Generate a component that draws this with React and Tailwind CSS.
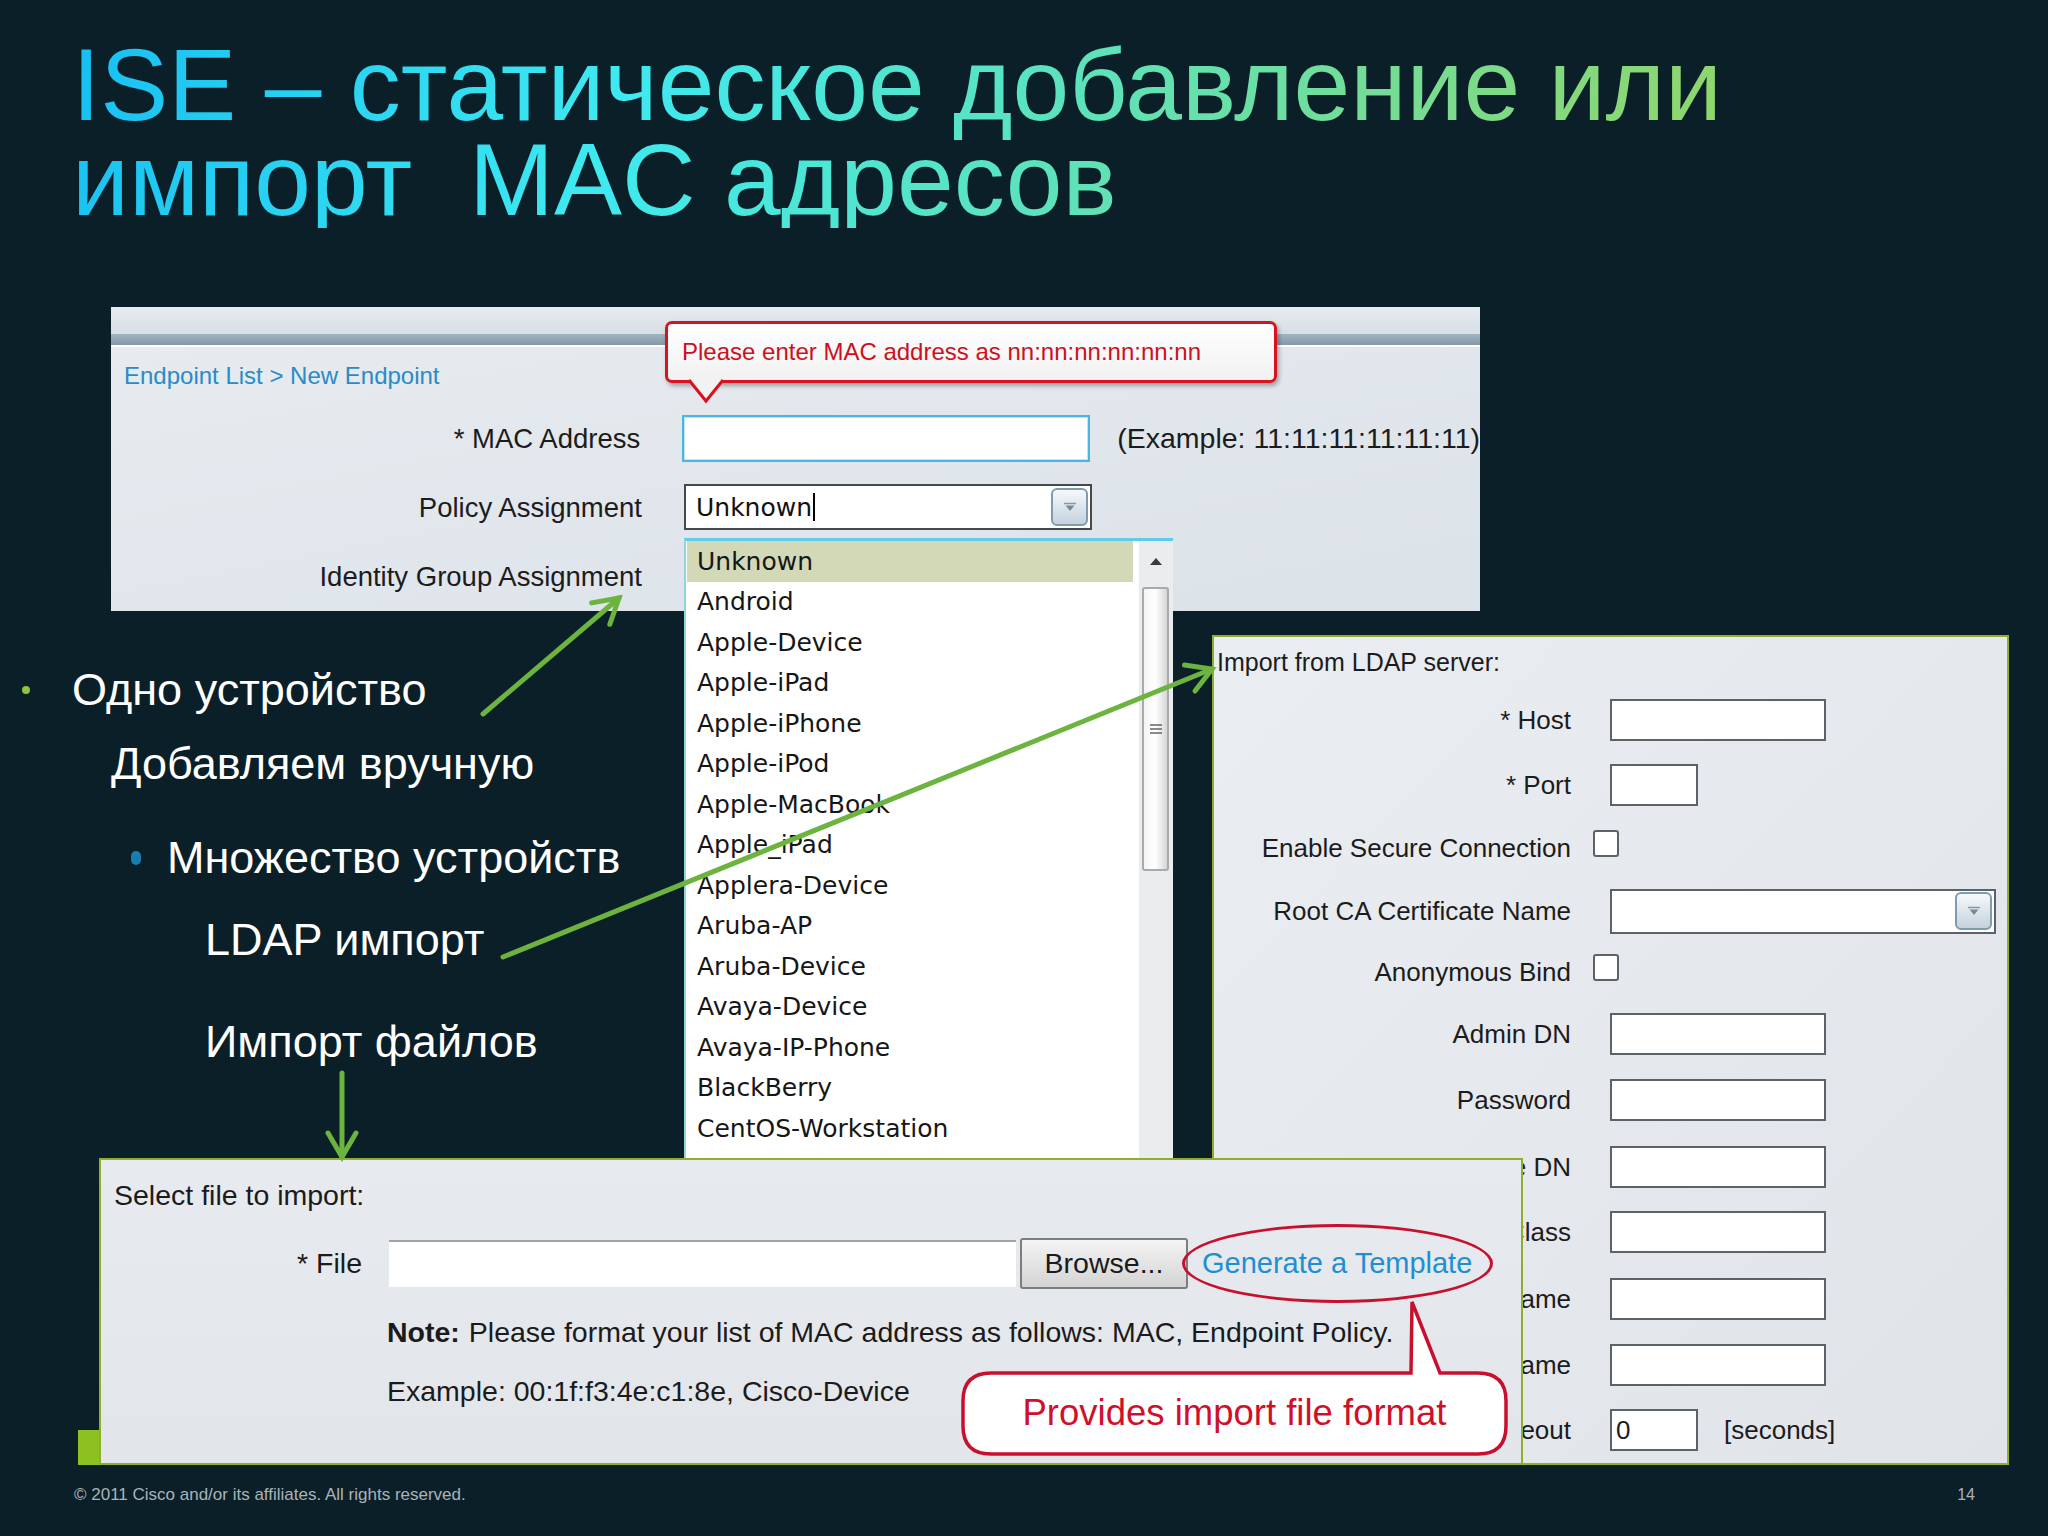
import React from 'react';

const deviceTypes = [
  'Unknown',
  'Android',
  'Apple-Device',
  'Apple-iPad',
  'Apple-iPhone',
  'Apple-iPod',
  'Apple-MacBook',
  'Apple_iPad',
  'Applera-Device',
  'Aruba-AP',
  'Aruba-Device',
  'Avaya-Device',
  'Avaya-IP-Phone',
  'BlackBerry',
  'CentOS-Workstation',
  'Cisco-Access-Point',
];

// row spacing in the LDAP form is uneven in the original screenshot
const ldapRows = [
  { label: '* Host', kind: 'input', width: 'w-[216px]', gap: 'mt-[10px]' },
  { label: '* Port', kind: 'input', width: 'w-[88px]', gap: 'mt-[21px]' },
  { label: 'Enable Secure Connection', kind: 'check', gap: 'mt-[19px]' },
  { label: 'Root CA Certificate Name', kind: 'select', gap: 'mt-[19px]' },
  { label: 'Anonymous Bind', kind: 'check', gap: 'mt-[17px]' },
  { label: 'Admin DN', kind: 'input', width: 'w-[216px]', gap: 'mt-[18px]' },
  { label: 'Password', kind: 'input', width: 'w-[216px]', gap: 'mt-[22px]' },
  { label: '* Base DN', kind: 'input', width: 'w-[216px]', gap: 'mt-[23px]' },
  { label: '* Object Class', kind: 'input', width: 'w-[216px]', gap: 'mt-[21px]' },
  { label: '* MAC Attribute Name', kind: 'input', width: 'w-[216px]', gap: 'mt-[23px]' },
  { label: 'Policy Name', kind: 'input', width: 'w-[216px]', gap: 'mt-[22px]' },
  { label: 'Timeout', kind: 'timeout', gap: 'mt-[21px]' },
];

const DropButton = () => (
  <span className="flex h-[38px] w-[37px] items-center justify-center rounded-[6px] border-2 border-[#7f9bb0] bg-linear-to-b from-[#f6f9fb] to-[#c4d2dd]">
    <svg width="14" height="10" viewBox="0 0 14 10">
      <path d="M1 1.5h12" stroke="#8a96a0" strokeWidth="1.5" />
      <path d="M2.5 3.5h9L7 9z" fill="#7b8894" />
    </svg>
  </span>
);

const TextBox = ({ className, children }) => (
  <div className={`flex h-[42px] items-center border-2 border-[#5b6268] bg-white pl-[4px] ${className}`}>{children}</div>
);

const CheckBox = () => <div className="h-[27px] w-[26px] rounded-[3px] border-2 border-[#5b6268] bg-white" />;

const App = () => {
  return (
    <div className="relative flex h-[1536px] w-[2048px] flex-col overflow-hidden bg-[#0b1f29] font-['Liberation_Sans',Arial,sans-serif]">
      {/* Slide title */}
      <div className="pl-[72px] pt-[38px]">
        <h1 className="w-fit bg-linear-[108deg,#17bff2_0%,#3ee9f0_33%,#5fe2b6_62%,#93d566_100%] bg-clip-text text-[102px] leading-[95px] text-transparent">
          ISE – статическое добавление или
          <br />
          импорт&nbsp; MAC адресов
        </h1>
      </div>

      {/* Bullets */}
      <div className="mt-[432px] flex flex-col text-[45px] leading-[60px] text-white">
        <div className="flex h-[60px] items-center pl-[22px]">
          <span className="h-[8px] w-[8px] rounded-full bg-[#8cc63f]" />
          <span className="ml-[42px]">Одно устройство</span>
        </div>
        <div className="mt-[14px] flex h-[60px] items-center pl-[111px]">Добавляем вручную</div>
        <div className="mt-[34px] flex h-[60px] items-center pl-[131px]">
          <span className="h-[14px] w-[10px] rounded-full bg-[#1a7db0]" />
          <span className="ml-[26px]">Множество устройств</span>
        </div>
        <div className="mt-[22px] flex h-[60px] items-center pl-[205px]">LDAP импорт</div>
        <div className="mt-[42px] flex h-[60px] items-center pl-[205px]">Импорт файлов</div>
      </div>

      {/* Footer */}
      <div className="mb-[31px] mt-auto flex h-[20px] items-center justify-between pl-[74px] pr-[73px] text-[17px] text-[#a9b3b9]">
        <span>© 2011 Cisco and/or its affiliates. All rights reserved.</span>
        <span className="text-[16px]">14</span>
      </div>

      {/* New Endpoint screenshot */}
      <section className="absolute left-[111px] top-[307px] flex h-[304px] w-[1369px] flex-col overflow-hidden bg-[#e1e7ec]">
        <div className="h-[30px] bg-linear-to-b from-[#e6ecf0] to-[#d7dfe5]" />
        <div className="h-[12px] bg-linear-to-b from-[#a2b4bf] to-[#8299a7]" />
        <div className="h-[2px] bg-white" />
        <div className="flex flex-1 flex-col bg-linear-to-br from-[#e6ebef] to-[#dbe2e8] pt-[14px]">
          <div className="flex h-[30px] items-center pl-[13px] text-[24px] text-[#2a8bc6]">Endpoint List &gt; New Endpoint</div>
          <div className="mt-[13px] flex flex-col text-[27.5px] text-[#1c1c1c]">
            <div className="flex h-[69px] items-center">
              <div className="w-[531px] whitespace-nowrap text-right">* MAC Address</div>
              <div className="ml-[42px] h-[47px] w-[408px] shrink-0 border-2 border-[#48b6e2] bg-white shadow-[inset_0_0_0_1px_#bfe6f5]" />
              <div className="ml-[27px] whitespace-nowrap text-[28.5px]">(Example: 11:11:11:11:11:11)</div>
            </div>
            <div className="flex h-[69px] items-center">
              <div className="w-[531px] whitespace-nowrap text-right">Policy Assignment</div>
              <div className="ml-[42px] flex h-[46px] w-[408px] items-center justify-between border-2 border-[#45494d] bg-white pl-[10px] pr-[2px]">
                <span className="flex items-center font-['DejaVu_Sans',Verdana,sans-serif] text-[25px] text-[#111]">
                  Unknown
                  <span className="ml-[1px] h-[28px] w-[2px] bg-black" />
                </span>
                <DropButton />
              </div>
            </div>
            <div className="flex h-[69px] items-center">
              <div className="w-[531px] whitespace-nowrap text-right">Identity Group Assignment</div>
            </div>
          </div>
        </div>

        {/* validation tooltip */}
        <div className="absolute left-[554px] top-[14px] flex h-[62px] w-[612px] items-center whitespace-nowrap rounded-[7px] border-[3px] border-[#d8121e] bg-linear-to-b from-white to-[#f1f1f1] pl-[14px] text-[24px] text-[#cc1020] shadow-[2px_3px_4px_rgba(0,0,0,0.3)]">
          Please enter MAC address as nn:nn:nn:nn:nn:nn
        </div>
        <svg className="absolute left-[576px] top-[72px]" width="40" height="26" viewBox="0 0 40 26">
          <path d="M2 0 L19 22 L36 0 Z" fill="#f2f2f2" />
          <path d="M2 1 L19 22 L36 1" fill="none" stroke="#d8121e" strokeWidth="3" />
        </svg>
      </section>

      {/* Policy dropdown list */}
      <div className="absolute left-[684px] top-[538px] z-10 flex h-[632px] w-[489px] border-l-2 border-t-[3px] border-l-[#8fd4e6] border-t-[#5fcde8] bg-white font-['DejaVu_Sans',Verdana,sans-serif] text-[25px] text-[#161616]">
        <ul className="flex-1 pl-[1px] pr-[6px]">
          {deviceTypes.map((d, i) => (
            <li
              key={d}
              className={i === 0 ? 'flex h-[40.5px] items-center bg-[#d3d8b6] pl-[10px]' : 'flex h-[40.5px] items-center pl-[10px]'}
            >
              {d}
            </li>
          ))}
        </ul>
        <div className="relative w-[34px] bg-[#eaeced]">
          <svg className="absolute left-[10px] top-[16px]" width="14" height="10" viewBox="0 0 14 10">
            <path d="M7 1 L13 8 H1 Z" fill="#3a3a3a" />
          </svg>
          <div className="absolute left-[3px] top-[46px] flex h-[284px] w-[27px] items-center justify-center rounded-[3px] border-2 border-[#a8abae] bg-linear-to-r from-[#f4f4f4] via-white to-[#d6d6d6]">
            <svg width="14" height="12" viewBox="0 0 14 12">
              <path d="M1 2h12M1 6h12M1 10h12" stroke="#666" strokeWidth="1.6" />
            </svg>
          </div>
        </div>
      </div>

      {/* LDAP import screenshot */}
      <section className="absolute left-[1212px] top-[635px] h-[830px] w-[797px] border-2 border-[#8fae2c] bg-linear-to-br from-[#eaedf1] to-[#e0e4e9] text-[26px] text-[#1c1c1c]">
        <div className="flex h-[51px] items-center pl-[3px] text-[25px]">Import from LDAP server:</div>
        <div className="flex flex-col">
          {ldapRows.map((r) => (
            <div key={r.label} className={`flex h-[44px] items-center ${r.gap}`}>
              <div className="w-[357px] whitespace-nowrap text-right">{r.label}</div>
              {r.kind === 'input' && <TextBox className={`ml-[39px] ${r.width}`} />}
              {r.kind === 'check' && (
                <div className="-mt-[10px] ml-[22px]">
                  <CheckBox />
                </div>
              )}
              {r.kind === 'select' && (
                <div className="ml-[39px] flex h-[45px] w-[386px] items-center justify-end border-2 border-[#5b6268] bg-white pr-[2px]">
                  <DropButton />
                </div>
              )}
              {r.kind === 'timeout' && (
                <>
                  <TextBox className="ml-[39px] w-[88px]">0</TextBox>
                  <span className="ml-[26px]">[seconds]</span>
                </>
              )}
            </div>
          ))}
        </div>
      </section>

      {/* slide accent */}
      <div className="absolute left-[78px] top-[1430px] h-[35px] w-[21px] bg-[#8dc021]" />

      {/* File import screenshot */}
      <section className="absolute left-[99px] top-[1158px] z-20 flex h-[307px] w-[1424px] flex-col border-2 border-[#8fae2c] bg-linear-to-b from-[#e7eaee] to-[#e2e5ea] text-[28.5px] text-[#1b1b1b]">
        <div className="mt-[12px] flex h-[46px] items-center pl-[13px]">Select file to import:</div>
        <div className="mt-[20px] flex h-[51px] items-center">
          <div className="w-[261px] text-right">* File</div>
          <div className="ml-[27px] h-[47px] w-[627px] border-t-2 border-[#a3a3a3] bg-white" />
          <div className="ml-[4px] flex h-[51px] w-[168px] items-center justify-center rounded-[3px] border-2 border-[#7d7d7d] bg-linear-to-b from-[#f4f4f4] to-[#d4d4d4]">
            Browse...
          </div>
          <div className="ml-[14px] whitespace-nowrap text-[29px] text-[#1f8fd4]">Generate a Template</div>
        </div>
        <div className="mt-[23px] flex h-[40px] items-center whitespace-nowrap pl-[286px]">
          <span className="font-bold">Note:</span>
          <span className="ml-[9px]">Please format your list of MAC address as follows: MAC, Endpoint Policy.</span>
        </div>
        <div className="mt-[19px] flex h-[40px] items-center pl-[286px]">Example: 00:1f:f3:4e:c1:8e, Cisco-Device</div>

        {/* annotations */}
        <div className="absolute left-[1081px] top-[64px] h-[79px] w-[311px] rounded-[50%] border-[3px] border-[#c8102e]" />
        <svg className="absolute left-[860px] top-[140px]" width="548" height="157" viewBox="0 0 548 157">
          <path
            d="M30 73 H450 L451 2 L479 73 H517 Q545 73 545 101 V126 Q545 154 517 154 H30 Q2 154 2 126 V101 Q2 73 30 73 Z"
            fill="white"
            stroke="#c8102e"
            strokeWidth="3.5"
          />
        </svg>
        <div className="absolute left-[860px] top-[213px] flex h-[81px] w-[547px] items-center justify-center whitespace-nowrap text-[36.5px] text-[#d0102a]">
          Provides import file format
        </div>
      </section>

      {/* Arrows */}
      <svg className="pointer-events-none absolute left-0 top-0 z-30" width="2048" height="1536" viewBox="0 0 2048 1536">
        <g stroke="#6cb33f" strokeWidth="5" fill="none" strokeLinecap="round">
          <path d="M483 714 L619 598" />
          <path d="M609.8 624.3 L619 598 L591.6 602.9" />
          <path d="M503 957 L1212 669" />
          <path d="M1195 691 L1212 669 L1184.5 665" />
          <path d="M342 1073 L342 1157" />
          <path d="M328 1133 L342 1157 L356 1133" />
        </g>
      </svg>
    </div>
  );
};

export default App;
